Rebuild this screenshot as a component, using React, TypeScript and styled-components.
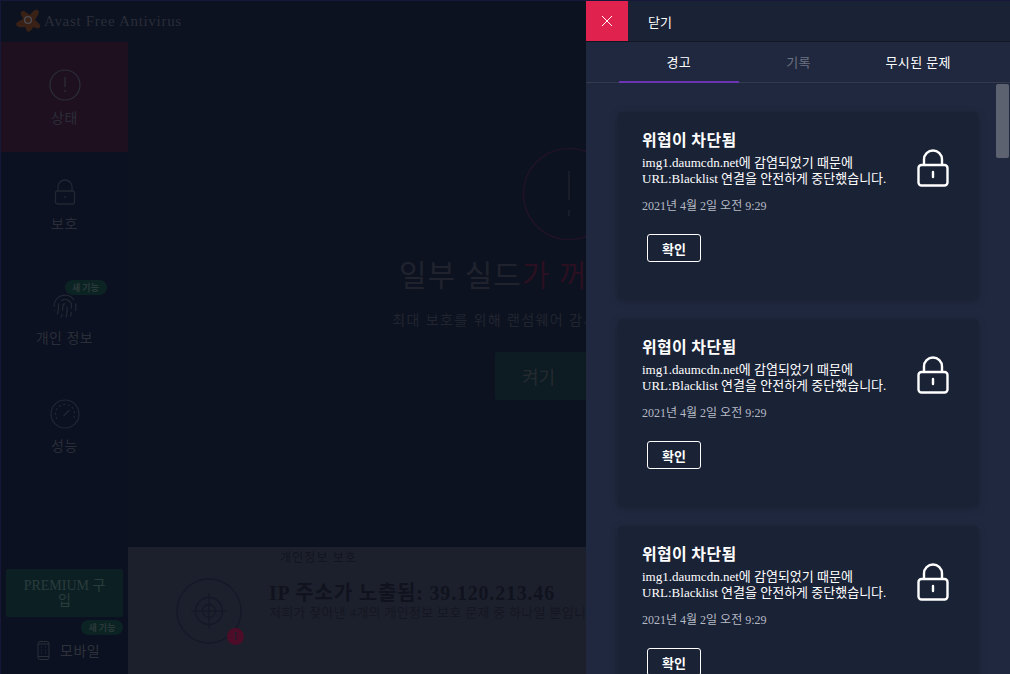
import React from "react";
import styled, { createGlobalStyle } from "styled-components";
import { Fingerprint } from "lucide-react";

const FONT = `"Liberation Serif", "Noto Sans CJK KR", serif`;

const GlobalStyle = createGlobalStyle`
  html, body {
    margin: 0;
    padding: 0;
    background: #0b1120;
    font-family: ${FONT};
  }
  * {
    box-sizing: border-box;
  }
`;

const Alert = {
  title: "위협이 차단됨",
  body: "img1.daumcdn.net에 감염되었기 때문에 URL:Blacklist 연결을 안전하게 중단했습니다.",
  date: "2021년 4월 2일 오전 9:29",
};

const App: React.FC = () => {
  return (
    <Window>
      <GlobalStyle />
      <TitleBar>
        <svg width="26" height="26" viewBox="0 0 26 26">
          <path
            d="M20 1c3-1 5 2 3 5l-3 5c2 2 4 3 5 5 1 3-2 4-4 3l-3-1c-1 3-4 6-6 4-1-1-1-3-2-4-3 0-6 1-8-1-2-2 0-4 2-5l4-2C7 7 5 5 6 3c1-2 4-1 6 1l3 2c1-2 3-4 5-5z"
            fill="#3a2116"
          />
          <circle cx="13" cy="11" r="3.4" fill="none" stroke="#4a4a50" strokeWidth="1.4" />
        </svg>
        <AppName>Avast Free Antivirus</AppName>
      </TitleBar>
      <Body>
        <Sidebar>
          <NavItem $active>
            <svg width="32" height="32" viewBox="0 0 32 32" fill="none" stroke="#2b2f3a" strokeWidth="1.2">
              <circle cx="16" cy="16" r="15" />
              <path d="M16 8v10M16 21v2" />
            </svg>
            <NavLabel>상태</NavLabel>
          </NavItem>
          <NavItem>
            <svg width="24" height="28" viewBox="0 0 24 28" fill="none" stroke="#232733" strokeWidth="1.3">
              <path d="M5 12V8a7 7 0 0 1 14 0v4" />
              <rect x="2.5" y="12" width="19" height="13" rx="2" />
              <path d="M12 17v2" />
            </svg>
            <NavLabel>보호</NavLabel>
          </NavItem>
          <NavItem>
            <IconSlot>
              <Fingerprint size={26} color="#232733" strokeWidth={1.2} />
              <NewBadge $floating>새 기능</NewBadge>
            </IconSlot>
            <NavLabel>개인 정보</NavLabel>
          </NavItem>
          <NavItem>
            <svg width="30" height="30" viewBox="0 0 30 30" fill="none" stroke="#232733" strokeWidth="1.2">
              <circle cx="15" cy="15" r="14" />
              <path d="M7 20a9.5 9.5 0 1 1 16 0" strokeDasharray="2 2.6" />
              <path d="M13.5 17l6-6" />
            </svg>
            <NavLabel>성능</NavLabel>
          </NavItem>
          <SideFooter>
            <PremiumButton>PREMIUM 구입</PremiumButton>
            <BadgeRow>
              <NewBadge>새 기능</NewBadge>
            </BadgeRow>
            <MobileRow>
              <svg width="13" height="19" viewBox="0 0 13 19" fill="none" stroke="#2b2f3a" strokeWidth="1">
                <rect x="1" y="0.5" width="11" height="18" rx="2" />
                <path d="M1 3h11M1 15.5h11M4 6h1M8 6h1M4 9h1M8 9h1M4 12h1M8 12h1" />
              </svg>
              모바일
            </MobileRow>
          </SideFooter>
        </Sidebar>
        <Main>
          <Hero>
            <svg width="94" height="94" viewBox="0 0 94 94" fill="none">
              <circle cx="47" cy="47" r="45.5" stroke="#21122a" strokeWidth="1.5" />
              <path d="M47 24v29M47 63v6" stroke="#1e222e" strokeWidth="1.5" />
            </svg>
            <HeroTitle>
              일부 실드<em>가 꺼져 있습니다</em>
            </HeroTitle>
            <HeroText>최대 보호를 위해 랜섬웨어 감시 및 웹 실드를 켜십시오</HeroText>
            <TurnOnButton>
              <span>켜기</span>
            </TurnOnButton>
          </Hero>
          <PrivacyPanel>
            <PanelTag>개인정보 보호</PanelTag>
            <PanelRow>
              <TargetIcon>
                <svg width="68" height="68" viewBox="0 0 68 68" fill="none" stroke="#141828" strokeWidth="1.3">
                  <circle cx="34" cy="34" r="32" />
                  <circle cx="34" cy="34" r="13.5" />
                  <circle cx="34" cy="34" r="6.5" />
                  <path d="M34 16v36M16 34h36" />
                </svg>
                <RedDot>!</RedDot>
              </TargetIcon>
              <PanelCopy>
                <PanelTitle>IP 주소가 노출됨: 39.120.213.46</PanelTitle>
                <PanelText>저희가 찾아낸 4개의 개인정보 보호 문제 중 하나일 뿐입니다</PanelText>
              </PanelCopy>
            </PanelRow>
          </PrivacyPanel>
        </Main>
      </Body>
      <Drawer>
        <DrawerHeader>
          <CloseButton>
            <svg width="12" height="12" viewBox="0 0 12 12" stroke="#fff" strokeWidth="1">
              <path d="M1 1l10 10M11 1L1 11" />
            </svg>
          </CloseButton>
          <CloseLabel>닫기</CloseLabel>
        </DrawerHeader>
        <Tabs>
          <Tab $active>경고</Tab>
          <Tab $muted>기록</Tab>
          <Tab>무시된 문제</Tab>
        </Tabs>
        <AlertList>
          {[0, 1, 2].map((i) => (
            <AlertCard key={i}>
              <AlertCopy>
                <AlertTitle>{Alert.title}</AlertTitle>
                <AlertBody>{Alert.body}</AlertBody>
                <AlertDate>{Alert.date}</AlertDate>
                <ConfirmButton>확인</ConfirmButton>
              </AlertCopy>
              <LockIcon viewBox="0 0 32 38" fill="none" stroke="#fff" strokeWidth="2.4">
                <path d="M7 16V10.5a9 9 0 0 1 18 0V16" />
                <rect x="1.5" y="16" width="29" height="20.5" rx="3" />
                <path d="M16 23v5" strokeLinecap="round" />
              </LockIcon>
            </AlertCard>
          ))}
          <ScrollThumb />
        </AlertList>
      </Drawer>
    </Window>
  );
};

export default App;

const Window = styled.div`
  position: relative;
  display: flex;
  flex-direction: column;
  width: 1010px;
  height: 674px;
  overflow: hidden;
  background: #0c1220;
  border-top: 1px solid #17173a;
  border-left: 1px solid #17173a;
`;

const TitleBar = styled.div`
  display: flex;
  align-items: center;
  gap: 3px;
  height: 41px;
  padding: 0 0 0 14px;
  flex: none;
`;

const AppName = styled.span`
  color: #2a2d38;
  font-size: 15px;
  letter-spacing: 0.7px;
`;

const Body = styled.div`
  display: flex;
  flex: 1;
  min-height: 0;
`;

const Sidebar = styled.nav`
  display: flex;
  flex-direction: column;
  width: 127px;
  flex: none;
  background: #0b1120;
`;

const NavItem = styled.div<{ $active?: boolean }>`
  display: flex;
  flex-direction: column;
  align-items: center;
  justify-content: flex-start;
  gap: 9px;
  height: 110px;
  padding-top: 27px;
  flex: none;
  background: ${(p) => (p.$active ? "#1f1020" : "transparent")};
`;

const NavLabel = styled.span`
  color: #2a2d38;
  font-size: 14px;
  line-height: 18px;
  letter-spacing: 0.5px;
`;

const IconSlot = styled.div`
  position: relative;
  display: flex;
  justify-content: center;
  width: 32px;
  height: 28px;
  margin-top: 4px;
`;

const NewBadge = styled.span<{ $floating?: boolean }>`
  display: inline-flex;
  align-items: center;
  justify-content: center;
  width: 42px;
  height: 15px;
  border-radius: 8px;
  background: #0c2323;
  color: #2b3a3a;
  font-size: 9px;
  font-weight: 700;
  font-family: "Noto Sans CJK KR", sans-serif;
  ${(p) =>
    p.$floating &&
    `
    position: absolute;
    left: 16px;
    top: -13px;
  `}
`;

const SideFooter = styled.div`
  display: flex;
  flex-direction: column;
  margin-top: auto;
  padding: 0 5px 14px;
`;

const PremiumButton = styled.div`
  display: flex;
  align-items: center;
  justify-content: center;
  height: 48px;
  padding: 0 12px;
  border-radius: 2px;
  background: #0c2024;
  color: #2a3c3c;
  font-size: 14px;
  line-height: 15px;
  text-align: center;
`;

const BadgeRow = styled.div`
  display: flex;
  justify-content: flex-end;
  margin-top: 3px;
`;

const MobileRow = styled.div`
  display: flex;
  align-items: center;
  gap: 10px;
  margin-top: 5px;
  padding-left: 31px;
  color: #2e313b;
  font-size: 14px;
  letter-spacing: 0.5px;
`;

const Main = styled.main`
  display: flex;
  flex-direction: column;
  flex: 1;
  min-width: 0;
  background: #0c1220;
`;

const Hero = styled.section`
  display: flex;
  flex-direction: column;
  align-items: center;
  flex: 1;
  padding-top: 105px;
  padding-right: 0;
`;

const HeroTitle = styled.h1`
  margin: 15px 0 0;
  color: #20232d;
  font-size: 30px;
  font-weight: 400;
  line-height: 40px;
  letter-spacing: 1px;
  white-space: nowrap;

  em {
    color: #2a1020;
    font-style: normal;
  }
`;

const HeroText = styled.p`
  margin: 15px 0 0;
  color: #22252f;
  font-size: 14px;
  line-height: 20px;
  letter-spacing: 1.4px;
  white-space: nowrap;
`;

const TurnOnButton = styled.div`
  display: flex;
  align-items: center;
  width: 148px;
  height: 48px;
  margin-top: 21px;
  padding-left: 27px;
  border-radius: 2px;
  background: #0c1c22;
  color: #262a30;
  font-size: 18px;
`;

const PrivacyPanel = styled.section`
  position: relative;
  display: flex;
  align-items: center;
  flex: none;
  height: 127px;
  background: #1c202c;
`;

const PanelTag = styled.span`
  position: absolute;
  left: 140px;
  top: 0;
  height: 22px;
  padding: 0 12px;
  color: #11141f;
  font-size: 12px;
  line-height: 22px;
  letter-spacing: 1.1px;
`;

const PanelRow = styled.div`
  display: flex;
  align-items: center;
  gap: 26px;
  padding-left: 47px;
`;

const TargetIcon = styled.div`
  position: relative;
  width: 68px;
  height: 68px;
  display: flex;
`;

const RedDot = styled.span`
  position: absolute;
  right: -1px;
  bottom: 0;
  width: 17px;
  height: 17px;
  border-radius: 50%;
  background: #4d0d28;
  color: #1c202c;
  font-size: 12px;
  font-weight: 700;
  line-height: 17px;
  text-align: center;
`;

const PanelCopy = styled.div`
  display: flex;
  flex-direction: column;
  margin-top: -20px;
`;

const PanelTitle = styled.div`
  color: #10131e;
  font-size: 20px;
  font-weight: 700;
  line-height: 24px;
  letter-spacing: 0.8px;
  white-space: nowrap;
`;

const PanelText = styled.div`
  color: #141722;
  font-size: 13px;
  line-height: 16px;
  letter-spacing: 0.3px;
  white-space: nowrap;
`;

const Drawer = styled.aside`
  position: absolute;
  top: 0;
  right: 0;
  bottom: 0;
  display: flex;
  flex-direction: column;
  width: 424px;
  background: #20283f;
`;

const DrawerHeader = styled.header`
  display: flex;
  align-items: center;
  flex: none;
  height: 41px;
  background: #1a2235;
  border-bottom: 1px solid #12161f;
`;

const CloseButton = styled.button`
  display: flex;
  align-items: center;
  justify-content: center;
  width: 42px;
  height: 40px;
  padding: 0;
  border: 0;
  background: #e0234e;
`;

const CloseLabel = styled.span`
  margin-left: 20px;
  color: #fff;
  font-size: 13px;
`;

const Tabs = styled.div`
  display: flex;
  flex: none;
  height: 41px;
  padding: 0 32px 0 33px;
  border-bottom: 1px solid #343a4c;
`;

const Tab = styled.div<{ $active?: boolean; $muted?: boolean }>`
  display: flex;
  align-items: center;
  justify-content: center;
  flex: 1;
  height: 41px;
  padding-bottom: 1px;
  color: ${(p) => (p.$muted ? "#6d7280" : "#fff")};
  font-size: 13px;
  letter-spacing: 0.4px;
  border-bottom: 2px solid ${(p) => (p.$active ? "#6a35b0" : "transparent")};
`;

const AlertList = styled.div`
  position: relative;
  display: flex;
  flex-direction: column;
  gap: 20px;
  flex: 1;
  min-height: 0;
  overflow: hidden;
  padding: 29px 0 0 32px;
`;

const AlertCard = styled.article`
  display: flex;
  flex: none;
  width: 360px;
  height: 187px;
  padding: 19px 29px 0 24px;
  border-radius: 4px;
  background: #1a2236;
  box-shadow: 0 2px 8px rgba(0, 0, 0, 0.22);
`;

const AlertCopy = styled.div`
  display: flex;
  flex-direction: column;
  align-items: flex-start;
  width: 252px;
`;

const AlertTitle = styled.div`
  color: #fff;
  font-size: 16px;
  font-weight: 700;
  line-height: 20px;
  letter-spacing: 0.3px;
`;

const AlertBody = styled.p`
  margin: 4px 0 0;
  color: #fff;
  font-size: 13px;
  line-height: 16px;
`;

const AlertDate = styled.div`
  margin-top: 11px;
  color: #b6bac4;
  font-size: 12px;
  line-height: 16px;
`;

const ConfirmButton = styled.button`
  width: 54px;
  height: 28px;
  margin: 20px 0 0 5px;
  padding: 0;
  border: 1px solid #fff;
  border-radius: 3px;
  background: transparent;
  color: #fff;
  font-family: ${FONT};
  font-size: 13px;
  font-weight: 700;
`;

const LockIcon = styled.svg`
  flex: none;
  width: 32px;
  height: 38px;
  margin: 18px 0 0 23px;
`;

const ScrollThumb = styled.div`
  position: absolute;
  top: 1px;
  right: 1px;
  width: 13px;
  height: 74px;
  border-radius: 2px;
  background: #5d6270;
`;
